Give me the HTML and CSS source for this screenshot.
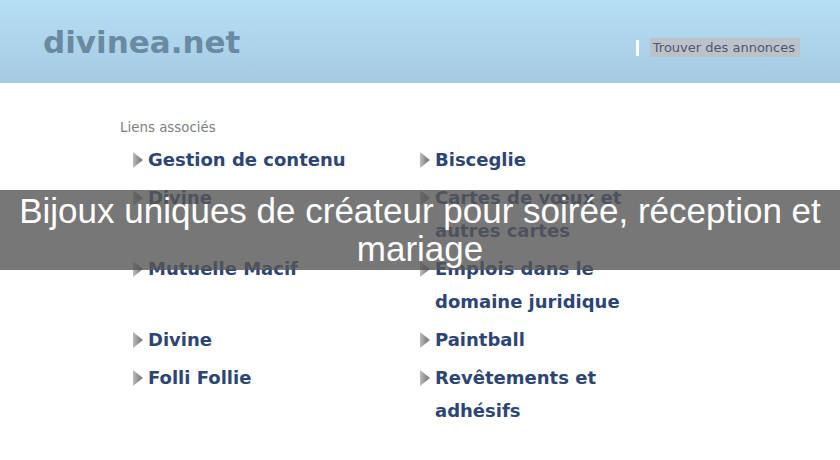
FILE: index.html
```html
<!DOCTYPE html>
<html lang="fr">
<head>
<meta charset="utf-8">
<title>divinea.net</title>
<link rel="stylesheet" href="styles.css">
</head>
<body>
<div class="page">
  <header class="header">
    <div class="logo">divinea.net</div>
    <div class="search">
      <span class="sep"></span>
      <span class="find">Trouver des annonces</span>
    </div>
  </header>
  <main class="content">
    <div class="title">Liens associés</div>
    <ul class="links">
      <li><span class="arrow"></span><a>Gestion de contenu</a></li>
      <li><span class="arrow"></span><a>Bisceglie</a></li>
      <li><span class="arrow"></span><a>Divine</a></li>
      <li><span class="arrow"></span><a>Cartes de vœux et autres cartes</a></li>
      <li><span class="arrow"></span><a>Mutuelle Macif</a></li>
      <li><span class="arrow"></span><a>Emplois dans le domaine juridique</a></li>
      <li><span class="arrow"></span><a>Divine</a></li>
      <li><span class="arrow"></span><a>Paintball</a></li>
      <li><span class="arrow"></span><a>Folli Follie</a></li>
      <li><span class="arrow"></span><a>Revêtements et adhésifs</a></li>
    </ul>
  </main>
  <div class="banner">Bijoux uniques de créateur pour soirée, réception et mariage</div>
</div>
</body>
</html>
```

FILE: styles.css
```css
html, body {
  margin: 0;
  padding: 0;
  background: #ffffff;
}
.page {
  position: relative;
  width: 840px;
  height: 460px;
  overflow: hidden;
  font-family: "DejaVu Sans", sans-serif;
}
.header {
  height: 83px;
  background: linear-gradient(to bottom, #b5ddf3 0%, #acd3ea 60%, #a5c9e1 100%);
  display: flex;
  align-items: flex-start;
  justify-content: space-between;
  box-sizing: border-box;
  padding: 22px 40px 0 43px;
}
.logo {
  font-weight: bold;
  font-size: 31px;
  color: #6a8aa1;
  line-height: 40px;
}
.search {
  display: flex;
  align-items: center;
  margin-top: 16px;
}
.sep {
  width: 3px;
  height: 16px;
  background: #ffffff;
  margin-right: 11px;
}
.find {
  background: #bcc3c8;
  color: #4e5672;
  font-size: 13px;
  line-height: 19px;
  padding: 0 5px 0 3px;
}
.content {
  padding: 37px 0 0 120px;
}
.title {
  font-size: 13.4px;
  color: #808080;
  line-height: 16px;
}
.links {
  list-style: none;
  margin: 7px 0 0 13px;
  padding: 0;
  display: grid;
  grid-template-columns: 287px 260px;
  row-gap: 5px;
}
.links li {
  display: flex;
  align-items: flex-start;
}
.arrow {
  width: 10px;
  height: 16px;
  margin-top: 9px;
  margin-right: 5px;
  flex: none;
  clip-path: polygon(0 0, 100% 50%, 0 100%);
  background: linear-gradient(to right, #bdbdbd 0%, #8a8a8a 60%, #7a7a7a 100%);
}
.links a {
  font-weight: bold;
  font-size: 18px;
  line-height: 33px;
  color: #2d4574;
  width: 215px;
}
.banner {
  position: absolute;
  left: 0;
  top: 190px;
  width: 840px;
  height: 80px;
  background: rgba(85, 85, 85, 0.8);
  color: #ffffff;
  font-family: "Liberation Sans", Arial, sans-serif;
  font-size: 35px;
  line-height: 38px;
  text-align: center;
  box-sizing: border-box;
  padding: 2px 10px 0;
}
```
